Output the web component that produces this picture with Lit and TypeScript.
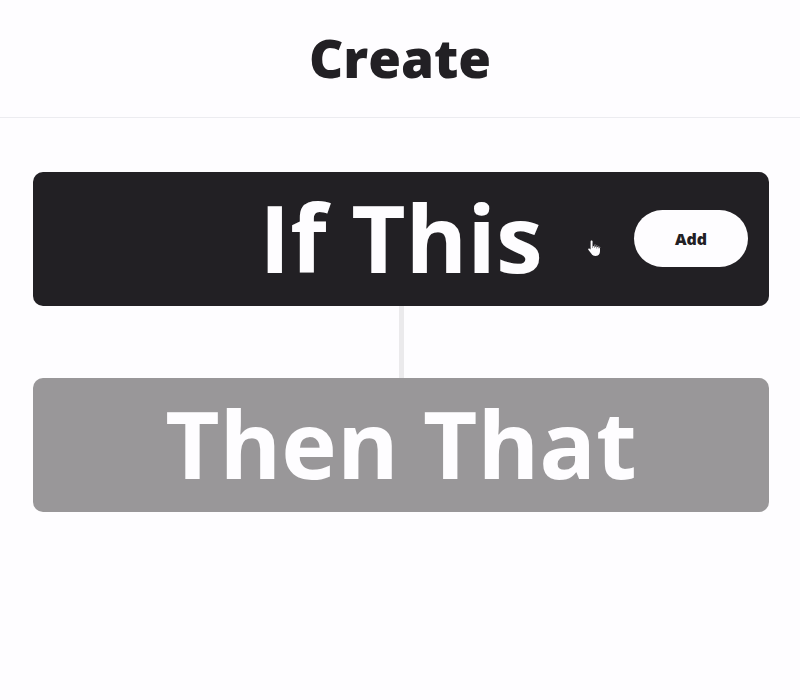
import { LitElement, html, css } from "lit";
import { customElement } from "lit/decorators.js";

@customElement("app-root")
export class AppRoot extends LitElement {
  static styles = css`
    :host {
      display: block;
      min-height: 100vh;
      background: #fefdff;
      color: #222024;
      font-family: "Open Sans", "Noto Sans", sans-serif;
    }
    header {
      padding: 22px 0 23px;
      border-bottom: 1px solid #ececf0;
      text-align: center;
    }
    h1,
    h2 {
      margin: 0;
    }
    h1 {
      font-size: 53px;
      font-weight: 800;
      line-height: 72px;
    }
    main {
      padding: 54px 31px 54px 33px;
    }
    .step {
      position: relative;
      display: flex;
      align-items: center;
      justify-content: center;
      min-height: 134px;
      border-radius: 10px;
      background: #222024;
      color: #fefdff;
    }
    .step.pending {
      background: #999799;
    }
    h2 {
      padding-bottom: 4px;
      font-size: 94px;
      font-weight: 700;
      line-height: 120px;
    }
    .connector {
      width: 5px;
      height: 72px;
      margin: 0 auto;
      background: #ebeaec;
    }
    .add {
      position: absolute;
      top: 38px;
      right: 21px;
      width: 114px;
      height: 57px;
      border: 0;
      border-radius: 29px;
      background: #fefdff;
      color: #222024;
      font: 800 16px/24px "Open Sans", sans-serif;
      cursor: pointer;
    }
    .pointer {
      position: absolute;
      top: 67px;
      right: 168px;
      width: 14px;
      height: 18px;
    }
  `;

  render() {
    return html`
      <header><h1>Create</h1></header>
      <main>
        <section class="step">
          <h2>If This</h2>
          <svg class="pointer" viewBox="0 0 14 18" aria-hidden="true">
            <path
              d="M4.500 1.500c.7 0 1.100.5 1.100 1.200V7l6 1.200c1 .2 1.400.8 1.400 1.700v2.300c0 3-1.700 4.800-4.500 4.800-2 0-3.200-.8-4.100-2.300L1.300 10.800c-.5-1 .6-1.800 1.400-1.100l.9.8V2.700c0-.7.3-1.200.9-1.200z"
              fill="#fefdff"
            />
            <path
              d="M5.500 9V3.500M7.500 9V5.800c1.200-.2 1.600.3 1.800.9 1-.2 1.600.2 1.800.8 1.100-.2 1.900.4 1.900 1.500M9.500 9.500V7M11.300 9.500V7.800"
              fill="none"
              stroke="#8d8b8f"
              stroke-width=".8"
            />
          </svg>
          <button class="add" type="button">Add</button>
        </section>
        <div class="connector"></div>
        <section class="step pending">
          <h2>Then That</h2>
        </section>
      </main>
    `;
  }
}
